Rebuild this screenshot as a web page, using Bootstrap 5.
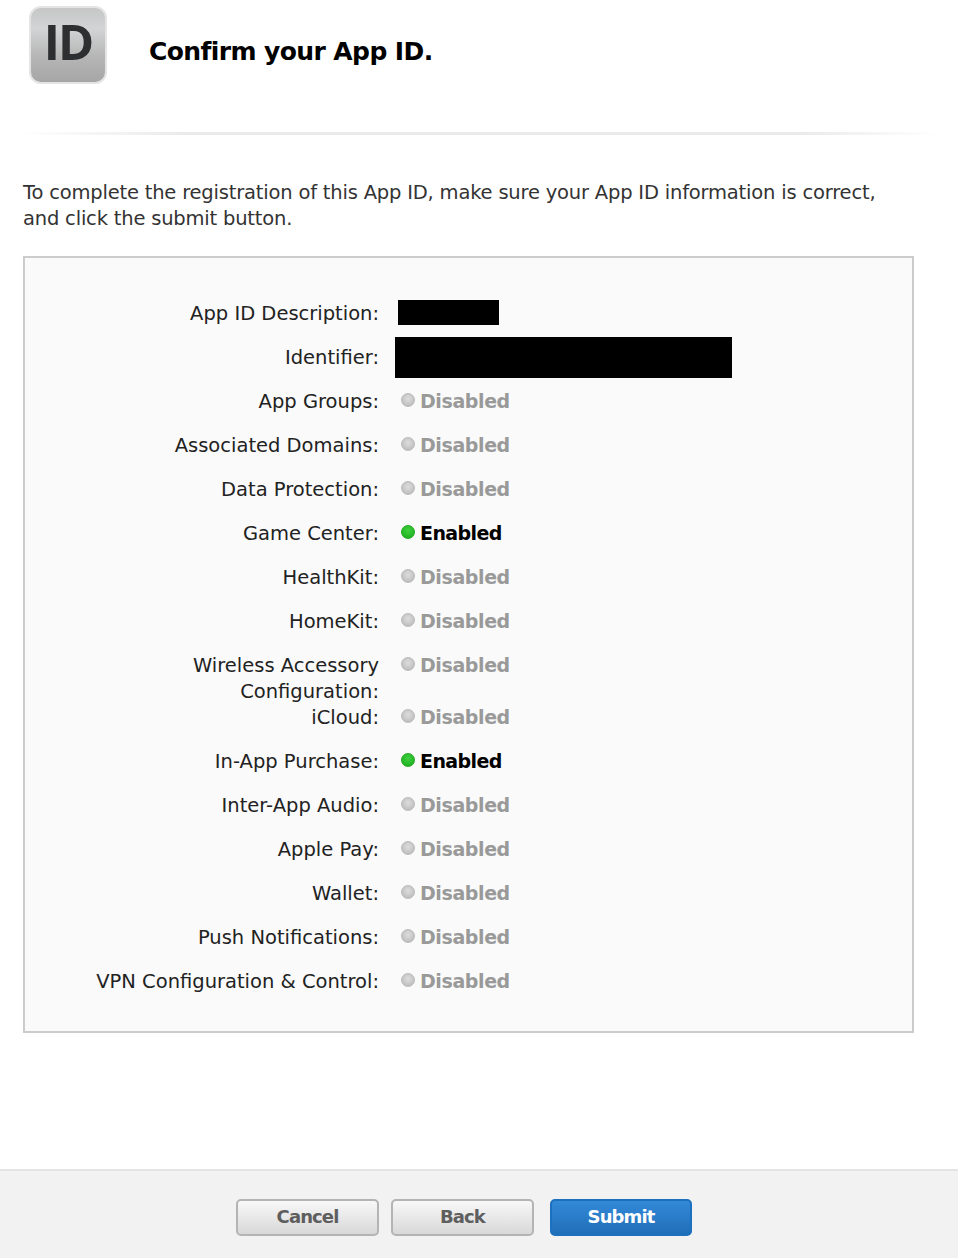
<!DOCTYPE html>
<html lang="en">
<head>
  <meta charset="UTF-8" />
  <meta name="viewport" content="width=device-width, initial-scale=1" />
  <title>Confirm your App ID</title>
  <link href="https://cdn.jsdelivr.net/npm/bootstrap@5.3.0/dist/css/bootstrap.min.css" rel="stylesheet" />
  <style>
    body {
      font-family: "DejaVu Sans", sans-serif;
      color: #333;
      background: #fff;
      height: 1258px;
      overflow: hidden;
    }

    .page-wrap {
      height: 1258px;
    }

    .page-head {
      height: 132px;
      padding: 6px 0 0 29px;
    }

    .id-icon {
      width: 78px;
      height: 78px;
      border-radius: 12px;
      border: 2px solid #e4e4e4;
      background: linear-gradient(180deg, #c6c6c6 0%, #d2d4d5 28%, #b6b6b6 65%, #a6a6a6 100%);
      color: #2d2f31;
      font-family: "Open Sans", sans-serif;
      font-size: 49px;
      font-weight: 700;
      line-height: 67px;
      letter-spacing: -2px;
    }

    .page-title {
      font-size: 25px;
      font-weight: 700;
      letter-spacing: -0.6px;
      color: #000;
      margin: 0 0 0 42px;
      line-height: 32px;
      padding-top: 30px;
    }

    .head-rule {
      height: 3px;
      margin: 0 20px;
      background: linear-gradient(90deg, #fff 0%, #eaeaea 18%, #eaeaea 85%, #fff 100%);
    }

    .intro-text {
      margin: 45px 70px 0 23px;
      font-size: 19.5px;
      letter-spacing: -0.19px;
      line-height: 26px;
    }

    .info-box {
      width: 891px;
      height: 777px;
      margin: 24px 0 0 23px;
      padding-top: 43px;
      border: 2px solid #ccc;
      background: #fafafa;
      font-size: 19.5px;
      line-height: 26px;
    }

    .info-row {
      padding-bottom: 18px;
    }

    .info-row.tight-row {
      padding-bottom: 0;
    }

    .info-label {
      width: 354px;
      flex: none;
      text-align: right;
      color: #222;
    }

    .info-value {
      position: relative;
      margin-left: 22px;
      font-size: 19px;
      line-height: 24px;
      letter-spacing: -0.4px;
      font-weight: 700;
      color: #999;
    }

    .info-value.is-on {
      letter-spacing: -0.6px;
      color: #000;
    }

    .status-dot {
      width: 14px;
      height: 14px;
      flex: none;
      border-radius: 50%;
      margin: 4px 5px 0 0;
      border: 1px solid #bbb;
      background: radial-gradient(circle at 50% 40%, #ddd, #b5b5b5);
    }

    .is-on .status-dot {
      border-color: #22a822;
      background: radial-gradient(circle at 50% 35%, #3ed03e, #18ab18);
    }

    .redact-block {
      position: absolute;
      background: #000;
    }

    .redact-desc {
      left: -3px;
      top: -1px;
      width: 101px;
      height: 25px;
    }

    .redact-id {
      left: -6px;
      top: -8px;
      width: 337px;
      height: 41px;
    }

    .page-foot {
      height: 89px;
      margin-top: 136px;
      padding: 28px 0 0 236px;
      border-top: 2px solid #e4e4e4;
      background: #f2f2f2;
    }

    .foot-btn {
      width: 143px;
      height: 37px;
      padding: 0 0 2px;
      border: 2px solid #b4b4b4;
      border-radius: 5px;
      background: linear-gradient(180deg, #f8f8f8 0%, #d8d8d8 100%);
      color: #5e5e5e;
      font-size: 18px;
      font-weight: 700;
      letter-spacing: -0.9px;
      line-height: 29px;
    }

    .foot-btn.btn-back {
      margin: 0 16px 0 12px;
    }

    .foot-btn.btn-submit {
      width: 142px;
      border-color: #1d70bd;
      background: linear-gradient(180deg, #3389d8 0%, #1f6fb8 100%);
      color: #fff;
    }

    .foot-btn.btn-submit:hover {
      color: #fff;
    }
  </style>
</head>
<body>
  <div class="page-wrap d-flex flex-column">
    <header class="page-head d-flex align-items-start">
      <div class="id-icon text-center">ID</div>
      <h1 class="page-title">Confirm your App ID.</h1>
    </header>
    <div class="head-rule"></div>

    <p class="intro-text">To complete the registration of this App ID, make sure your App ID information is correct, and click the submit button.</p>

    <div class="info-box">
      <div class="info-row d-flex">
        <div class="info-label">App ID Description:</div>
        <div class="info-value"><span class="redact-block redact-desc"></span></div>
      </div>
      <div class="info-row d-flex">
        <div class="info-label">Identifier:</div>
        <div class="info-value"><span class="redact-block redact-id"></span></div>
      </div>
      <div id="statusRows"></div>
    </div>

    <footer class="page-foot d-flex">
      <button type="button" class="btn foot-btn">Cancel</button>
      <button type="button" class="btn foot-btn btn-back">Back</button>
      <button type="button" class="btn foot-btn btn-submit">Submit</button>
    </footer>
  </div>

  <script src="https://cdn.jsdelivr.net/npm/bootstrap@5.3.0/dist/js/bootstrap.bundle.min.js"></script>
  <script>
    const services = [
      ["App Groups", false],
      ["Associated Domains", false],
      ["Data Protection", false],
      ["Game Center", true],
      ["HealthKit", false],
      ["HomeKit", false],
      ["Wireless Accessory Configuration", false],
      ["iCloud", false],
      ["In-App Purchase", true],
      ["Inter-App Audio", false],
      ["Apple Pay", false],
      ["Wallet", false],
      ["Push Notifications", false],
      ["VPN Configuration &amp; Control", false]
    ];

    document.getElementById("statusRows").innerHTML = services.map(([name, on]) => {
      const tight = name.startsWith("Wireless") ? " tight-row" : "";
      return `<div class="info-row d-flex${tight}">
        <div class="info-label">${name.replace("Accessory ", "Accessory<br>")}:</div>
        <div class="info-value d-flex align-items-start${on ? " is-on" : ""}">
          <span class="status-dot"></span>${on ? "Enabled" : "Disabled"}
        </div>
      </div>`;
    }).join("");
  </script>
</body>
</html>
